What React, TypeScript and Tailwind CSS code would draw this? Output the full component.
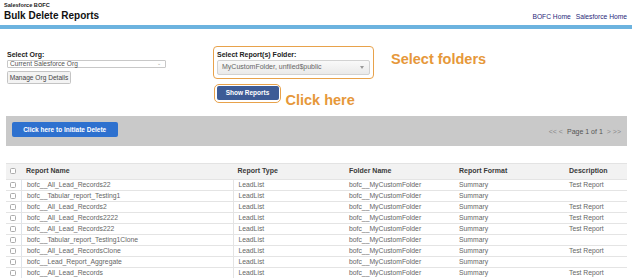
const rows = [
  { name: 'bofc__All_Lead_Records22', desc: 'Test Report' },
  { name: 'bofc__Tabular_report_Testing1', desc: '' },
  { name: 'bofc__All_Lead_Records2', desc: 'Test Report' },
  { name: 'bofc__All_Lead_Records2222', desc: 'Test Report' },
  { name: 'bofc__All_Lead_Records222', desc: 'Test Report' },
  { name: 'bofc__Tabular_report_Testing1Clone', desc: '' },
  { name: 'bofc__All_Lead_RecordsClone', desc: 'Test Report' },
  { name: 'bofc__Lead_Report_Aggregate', desc: '' },
  { name: 'bofc__All_Lead_Records', desc: 'Test Report' },
];

const cols = 'grid grid-cols-[15px_212px_111px_110px_110px_63px]';

function Checkbox() {
  return <span className="block w-[6px] h-[6px] ml-[4px] rounded-[1.5px] border border-[#ababab] bg-white" />;
}

export default function App() {
  return (
    <div className="w-[640px] h-[280px] overflow-hidden bg-white font-['Liberation_Sans',Arial,sans-serif]">
      {/* page header */}
      <div className="pt-[2px] pl-[4px] pr-[13px]">
        <p className="text-[5.6px] leading-[7px] font-semibold text-[#222]">Salesforce BOFC</p>
        <div className="flex justify-between mt-[1.4px]">
          <h1 className="text-[10px] leading-[12px] font-bold text-[#111]">Bulk Delete Reports</h1>
          <div className="self-end mb-[1px] flex gap-[5px] text-[6.7px] leading-[8px] text-[#27287a]">
            <span>BOFC Home</span>
            <span>Salesforce Home</span>
          </div>
        </div>
      </div>
      <div className="mt-[2.6px] w-[632px] h-[4px] bg-[#6cb3df]" />

      {/* org + folder selection */}
      <div className="flex mt-[17px] h-[33px]">
        <div className="w-[206px] ml-[7px] pt-[4px]">
          <p className="text-[7px] leading-[9px] font-bold text-[#222]">Select Org:</p>
          <div className="mt-[1px] w-[159px] h-[8px] flex items-center justify-between border border-[#c8c8c8] rounded-[1px] bg-white pl-[2px] pr-[4px]">
            <span className="text-[6.6px] leading-[8px] text-[#555]">Current Salesforce Org</span>
            <span className="text-[5px] leading-[5px] text-[#999]">&#8964;</span>
          </div>
          <div className="mt-[3px] w-[64px] h-[13px] flex items-center justify-center border border-[#c4c4c4] rounded-[1.5px] bg-[#f3f3f3] text-[6.6px] text-[#444]">
            Manage Org Details
          </div>
        </div>
        <div className="w-[161px] h-[33px] rounded-[4px] border border-[#e8a24b] px-[3px] pt-[3px]">
          <p className="text-[7px] leading-[9px] font-bold text-[#222]">Select Report(s) Folder:</p>
          <div className="mt-[1px] h-[15px] flex items-center justify-between rounded-[2px] border border-[#d2d2d2] bg-gradient-to-b from-[#f9f9f9] to-[#eaeaea] pl-[4px] pr-[5px]">
            <span className="text-[7px] text-[#666]">MyCustomFolder, unfiled$public</span>
            <span className="w-0 h-0 border-l-[2.5px] border-r-[2.5px] border-t-[3px] border-l-transparent border-r-transparent border-t-[#999]" />
          </div>
        </div>
        <p className="ml-[17px] mt-[6.5px] text-[14.5px] leading-[15px] font-bold text-[#e6983a]">Select folders</p>
      </div>

      <div className="flex items-start mt-[4.7px] h-[19px] ml-[214px]">
        <div className="w-[67px] h-[19px] rounded-[5px] border border-[#e8a24b] p-[1.5px]">
          <div className="h-[14px] rounded-[2px] bg-[#3d5b96] flex items-center justify-center text-[6.5px] font-bold text-white">
            Show Reports
          </div>
        </div>
        <p className="ml-[4.5px] mt-[9.5px] text-[14.5px] leading-[15px] font-bold text-[#e6983a]">Click here</p>
      </div>

      {/* action bar */}
      <div className="mt-[13.3px] ml-[6px] w-[621px] h-[30px] bg-[#c9c9c9] flex justify-between pl-[5.7px] pr-[6px]">
        <div className="mt-[5.7px] w-[106px] h-[15.6px] rounded-[2px] bg-[#2e71cf] flex items-center justify-center text-[6.5px] font-bold text-white">
          Click here to Initiate Delete
        </div>
        <div className="mt-[11.5px] flex gap-[4px] text-[7px] leading-[9px] text-[#555]">
          <span className="text-[#8a8a8a]">&lt;&lt; &lt;</span>
          <span>Page 1 of 1</span>
          <span className="text-[#8a8a8a]">&gt; &gt;&gt;</span>
        </div>
      </div>

      {/* report table */}
      <div className="mt-[16.7px] ml-[6px] w-[621px] border-t border-[#e3e3e3]">
        <div className={`${cols} h-[15px] items-center bg-[#f2f2f2] text-[7px] font-bold text-[#3a3a3a]`}>
          <Checkbox />
          <span className="pl-[5px]">Report Name</span>
          <span className="pl-[4.5px]">Report Type</span>
          <span className="pl-[5px]">Folder Name</span>
          <span className="pl-[5px]">Report Format</span>
          <span className="pl-[5px]">Description</span>
        </div>
        {rows.map((r) => (
          <div key={r.name} className={`${cols} h-[11px] items-center border-t border-[#e4e4e4] text-[6.8px] text-[#666]`}>
            <Checkbox />
            <span className="h-full flex items-center pl-[5px] border-l border-[#dde3ea]">{r.name}</span>
            <span className="h-full flex items-center pl-[4.5px] border-l border-[#e4e4e4]">LeadList</span>
            <span className="pl-[5px]">bofc__MyCustomFolder</span>
            <span className="pl-[5px]">Summary</span>
            <span className="pl-[5px]">{r.desc}</span>
          </div>
        ))}
      </div>
    </div>
  );
}
